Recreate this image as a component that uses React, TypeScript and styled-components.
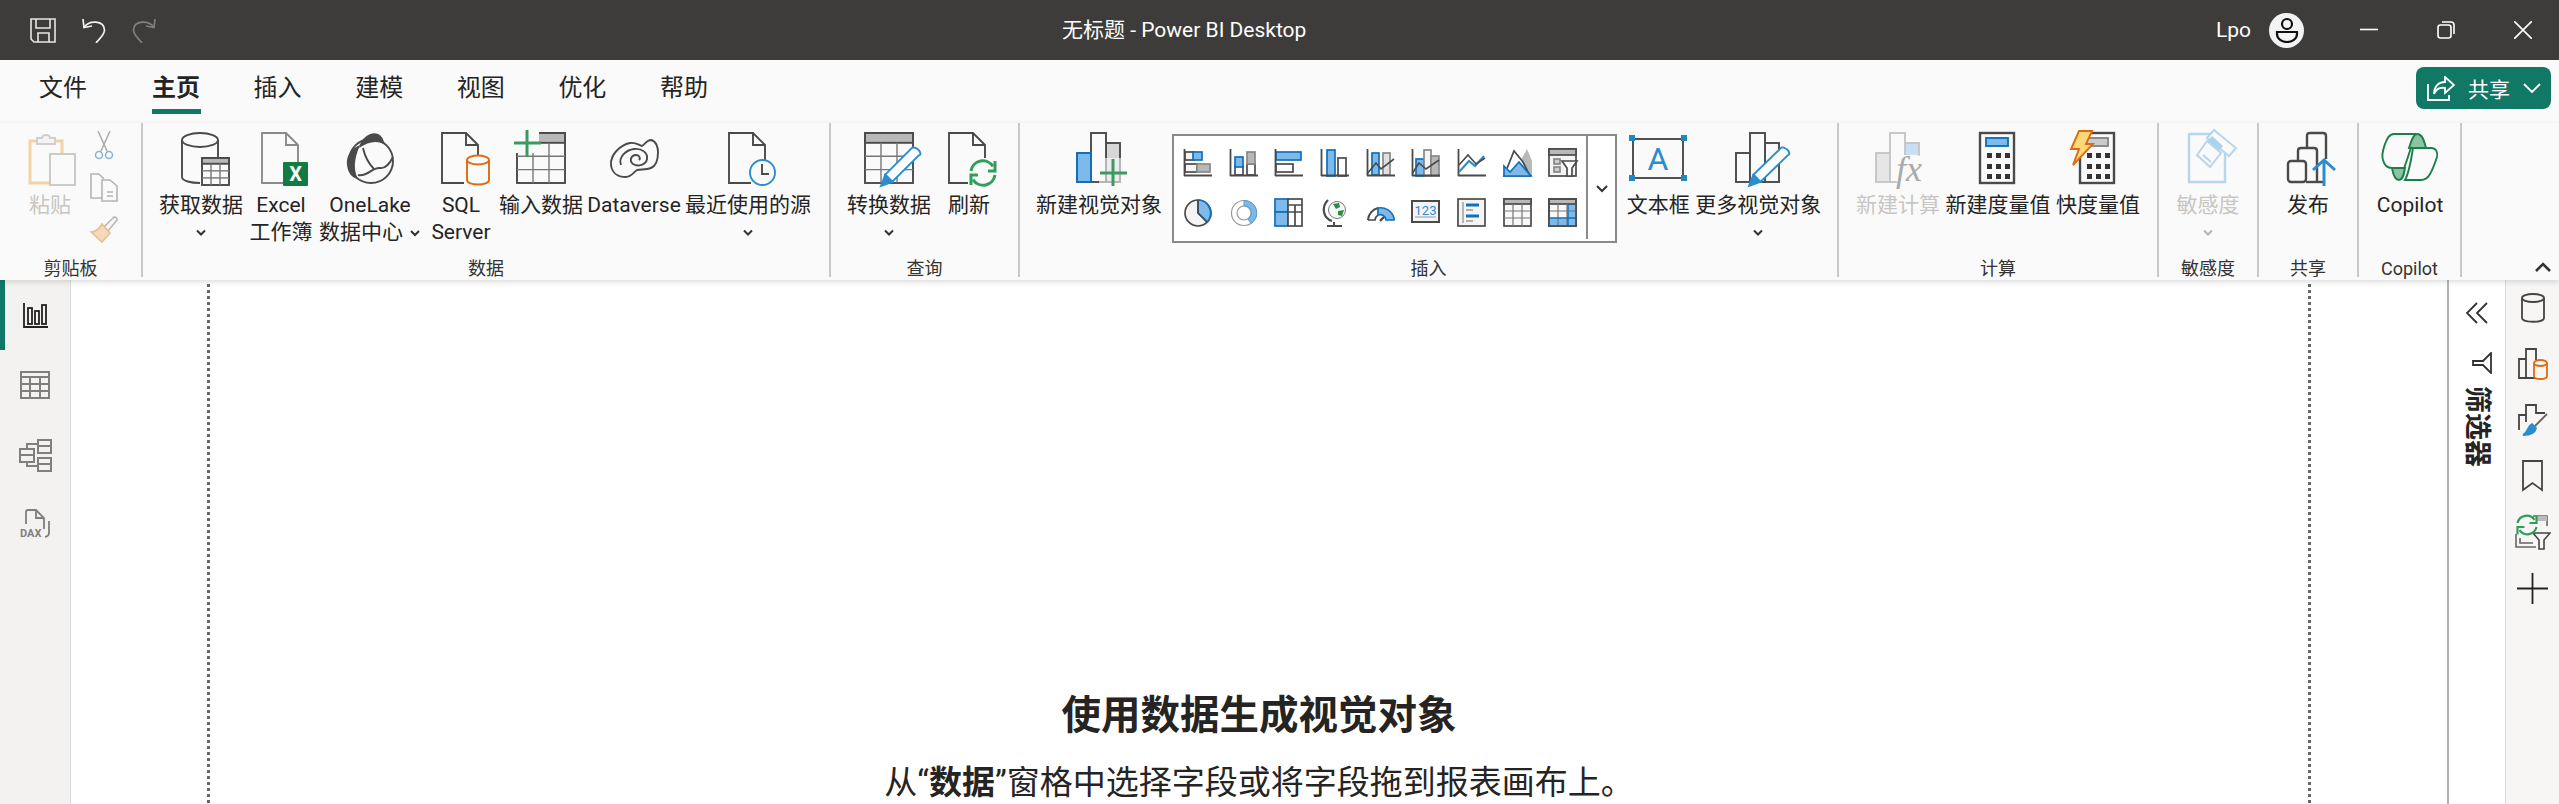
import styled, { createGlobalStyle } from 'styled-components';

const FONT = `Roboto, "Noto Sans CJK SC", sans-serif`;
const DARK = '#4a4a4a';
const BLUE = '#1170b8';
const SKY = '#7db9ea';
const GREY = '#b8b8b8';
const GREEN = '#2e9e5b';
const ORANGE = '#dd6b10';
const PEN = '#2a8dd0';

const GlobalStyle = createGlobalStyle`
  html, body { margin: 0; padding: 0; background: #fff; }
  body { font-family: ${FONT}; color: #252423; }
`;

const Window = styled.div`
  width: 2559px;
  height: 804px;
  display: flex;
  flex-direction: column;
  overflow: hidden;
`;

// title bar
const TitleBar = styled.header`
  flex: 0 0 60px;
  display: flex;
  align-items: center;
  background: #3d3c3a;
  color: #fff;
`;

const QuickAccess = styled.div`
  flex: 0 0 1062px;
  display: flex;
  align-items: center;
  gap: 26px;
  padding-left: 30px;
  box-sizing: border-box;
`;

const WindowTitle = styled.div`
  flex: 1;
  font-size: 21px;
  line-height: 60px;
  white-space: nowrap;
`;

const UserName = styled.span`
  font-size: 21px;
  margin-right: 18px;
`;

const Avatar = styled.div`
  width: 35px;
  height: 35px;
  border-radius: 50%;
  background: #f3f3f3;
  display: flex;
  align-items: center;
  justify-content: center;
  margin-right: 56px;
`;

const WindowButtons = styled.div`
  display: flex;
  align-items: center;
  gap: 59px;
  padding-right: 27px;
`;

// tabs
const TabRow = styled.div`
  flex: 0 0 63px;
  display: flex;
  background: #fafafa;
  padding-left: 39px;
  box-sizing: border-box;
`;

const Tab = styled.div<{ $active?: boolean }>`
  width: 49px;
  margin-right: 52.6px;
  height: 54px;
  font-size: 24px;
  line-height: 30px;
  padding-top: 13px;
  box-sizing: border-box;
  white-space: nowrap;
  font-weight: ${({ $active }) => ($active ? 600 : 400)};
  border-bottom: 5px solid ${({ $active }) => ($active ? '#117865' : 'transparent')};
  &:first-child { margin-right: 64px; }
`;

const ShareButton = styled.button`
  margin: 7px 8px 0 auto;
  width: 135px;
  height: 42px;
  border: 0;
  border-radius: 8px;
  background: #117865;
  color: #fff;
  font: 21px ${FONT};
  display: flex;
  align-items: center;
  padding: 0 0 0 11px;
  gap: 13px;
`;

// ribbon
const Ribbon = styled.div`
  flex: 0 0 157px;
  display: flex;
  background: #fafafa;
  padding-bottom: 3px;
  box-sizing: border-box;
  position: relative;
  box-shadow: 0 2px 6px rgba(0, 0, 0, 0.14);
  z-index: 2;
`;

const Group = styled.section<{ $w: number }>`
  flex: 0 0 ${({ $w }) => $w}px;
  display: flex;
  flex-direction: column;
  border-right: 2px solid #c8c8c8;
  box-sizing: border-box;
`;

const GroupItems = styled.div<{ $pad: number }>`
  flex: 1;
  display: flex;
  align-items: flex-start;
  padding-left: ${({ $pad }) => $pad}px;
  padding-top: 8px;
`;

const GroupLabel = styled.div`
  height: 24px;
  padding-top: 7px;
  box-sizing: border-box;
  line-height: 18px;
  font-size: 18px;
  text-align: center;
  color: #333;
  white-space: nowrap;
`;

const Item = styled.div<{ $w: number; $off?: boolean }>`
  flex: 0 0 ${({ $w }) => $w}px;
  min-width: 0;
  display: flex;
  flex-direction: column;
  align-items: center;
  font-size: 21px;
  line-height: 27px;
  text-align: center;
  white-space: nowrap;
  color: ${({ $off }) => ($off ? '#c8c6c4' : '#252423')};
`;

const BigSvg = styled.svg`
  width: 64px;
  height: 60px;
  margin-bottom: 1px;
  flex: none;
  overflow: visible;
  display: block;
`;

const SmallColumn = styled.div`
  flex: 0 0 30px;
  display: flex;
  flex-direction: column;
  align-items: center;
  gap: 13px;
`;

const Caret = styled.svg`
  width: 12px;
  height: 27px;
  display: block;
`;

const InlineCaret = styled(Caret)`
  display: inline-block;
  vertical-align: top;
  margin-left: 6px;
`;

const Gallery = styled.div`
  flex: 0 0 443px;
  height: 109px;
  margin: 3px 5px 0 2px;
  box-sizing: border-box;
  border: 2px solid #8a8a8a;
  background: #fff;
  display: flex;
`;

const GalleryGrid = styled.div`
  flex: 1;
  display: grid;
  grid-template-columns: repeat(9, 45.7px);
  grid-auto-rows: 50px;
  padding: 2px 0 0 1px;
  border-right: 2px solid #8a8a8a;
  margin-bottom: 2px;
`;

const GalleryCell = styled.div`
  display: flex;
  align-items: center;
  justify-content: center;
`;

const GallerySvg = styled.svg`
  width: 30px;
  height: 30px;
  overflow: visible;
`;

const GalleryMore = styled.div`
  flex: 0 0 27px;
  display: flex;
  align-items: center;
  justify-content: center;
`;

const CollapseButton = styled.div`
  margin-left: auto;
  align-self: flex-end;
  padding: 0 8px 5px 0;
  line-height: 0;
`;

// body of the window
const Workspace = styled.div`
  flex: 1;
  min-height: 0;
  display: flex;
`;

const LeftRail = styled.nav`
  flex: 0 0 71px;
  background: #f3f2f1;
  border-right: 1px solid #dcdcdc;
  box-sizing: border-box;
`;

const RailItem = styled.div<{ $active?: boolean }>`
  height: 70px;
  display: flex;
  align-items: center;
  justify-content: center;
  box-sizing: border-box;
  border-left: 5px solid ${({ $active }) => ($active ? '#117865' : 'transparent')};
  padding-right: 5px;
`;

const Canvas = styled.main`
  flex: 1;
  padding: 4px 136px 0;
  background: #fff;
  min-width: 0;
`;

const Page = styled.div`
  height: 100%;
  box-sizing: border-box;
  padding-top: 407px;
  text-align: center;
  background-image:
    repeating-linear-gradient(to bottom, #666 0 3px, transparent 3px 6px),
    repeating-linear-gradient(to bottom, #666 0 3px, transparent 3px 6px);
  background-size: 3px 100%, 3px 100%;
  background-position: left top, right top;
  background-repeat: no-repeat;
`;

const Heading = styled.h2`
  margin: 0;
  font-size: 39.5px;
  line-height: 50px;
  font-weight: 700;
  color: #252423;
`;

const Hint = styled.p`
  margin: 22px 0 0;
  font-size: 33px;
  line-height: 40px;
  color: #252423;
  white-space: nowrap;
  b { font-weight: 700; }
`;

const FilterPane = styled.aside`
  flex: 0 0 58px;
  border-left: 2px solid #b4b4b4;
  box-sizing: border-box;
  display: flex;
  flex-direction: column;
  align-items: center;
  padding-top: 22px;
  background: #fff;
`;

const FilterTitle = styled.div`
  writing-mode: vertical-rl;
  text-orientation: sideways;
  font-size: 27px;
  line-height: 28px;
  font-weight: 700;
  margin-top: 12px;
  color: #252423;
`;

const FunnelMark = styled.svg`
  margin: 28px 0 0 10px;
`;

const RightRail = styled.aside`
  flex: 0 0 54px;
  background: #f7f6f5;
  border-left: 1px solid #dcdcdc;
  box-sizing: border-box;
`;

const RightItem = styled.div`
  height: 56px;
  display: flex;
  align-items: center;
  justify-content: center;
`;

const Big = ({ children }: { children: React.ReactNode }) => (
  <BigSvg viewBox="0 0 64 60" fill="none" stroke={DARK} strokeWidth={1.9}>
    {children}
  </BigSvg>
);

const Cell = ({ children }: { children: React.ReactNode }) => (
  <GallerySvg viewBox="0 0 30 30" fill="none" stroke={DARK} strokeWidth={1.7}>
    {children}
  </GallerySvg>
);

const Chevron = ({ off }: { off?: boolean }) => (
  <Caret viewBox="0 0 12 27">
    <path d="M2 11.5l4 4 4-4" fill="none" stroke={off ? '#b4b4b4' : '#333'} strokeWidth={2} />
  </Caret>
);

const Doc = ({ x = 13, color = DARK }: { x?: number; color?: string }) => (
  <path
    d={`M${x + 36} 34V14L${x + 24} 2H${x}V52H${x + 22}M${x + 24} 2V14H${x + 36}`}
    stroke={color}
    fill="#fafafa"
  />
);

const GridTable = ({ x, y, w, h, rows = 4, cols = 3 }: { x: number; y: number; w: number; h: number; rows?: number; cols?: number }) => {
  const head = h / (rows + 0.4) * 0.6 + 1;
  const lines = [];
  for (let i = 1; i < cols; i++) {
    const lx = x + (w * i) / cols;
    lines.push(<path key={`c${i}`} d={`M${lx} ${y + head}V${y + h}`} stroke="#777" strokeWidth={1.4} />);
  }
  for (let i = 1; i < rows; i++) {
    const ly = y + head + ((h - head) * i) / rows;
    lines.push(<path key={`r${i}`} d={`M${x} ${ly}H${x + w}`} stroke="#777" strokeWidth={1.4} />);
  }
  return (
    <g>
      <rect x={x} y={y} width={w} height={h} fill="#fafafa" />
      <rect x={x} y={y} width={w} height={head} fill={GREY} />
      {lines}
    </g>
  );
};

const Pencil = ({ x1, y1, x2, y2 }: { x1: number; y1: number; x2: number; y2: number }) => {
  const len = Math.hypot(x2 - x1, y2 - y1);
  const nx = ((y2 - y1) / len) * 5;
  const ny = (-(x2 - x1) / len) * 5;
  const bx = x1 + ((x2 - x1) / len) * 11;
  const by = y1 + ((y2 - y1) / len) * 11;
  return (
    <g stroke={PEN}>
      <path d={`M${bx + nx} ${by + ny}L${x2 + nx} ${y2 + ny}C${x2 + nx + 3} ${y2 + ny - 4} ${x2 - nx + 6} ${y2 - ny - 2} ${x2 - nx} ${y2 - ny}L${bx - nx} ${by - ny}Z`} fill="#fff" />
      <path d={`M${x1} ${y1}L${bx + nx} ${by + ny}L${bx - nx} ${by - ny}Z`} fill={PEN} />
    </g>
  );
};

const RefreshArrows = ({ cx, cy, r, w = 3 }: { cx: number; cy: number; r: number; w?: number }) => (
  <g stroke={GREEN} strokeWidth={w}>
    <path d={`M${cx - r} ${cy - 2}A${r} ${r} 0 0 1 ${cx + r - 2} ${cy - r * 0.55}`} />
    <path d={`M${cx + r} ${cy + 2}A${r} ${r} 0 0 1 ${cx - r + 2} ${cy + r * 0.55}`} />
    <path d={`M${cx + r} ${cy - r}V${cy - 2}H${cx + r - 7}`} />
    <path d={`M${cx - r} ${cy + r}V${cy + 2}H${cx - r + 7}`} />
  </g>
);

const Bars = ({ a = '#fafafa', b = '#fafafa', c = '#fafafa', color = DARK }: { a?: string; b?: string; c?: string; color?: string }) => (
  <g stroke={color}>
    <rect x={39} y={12} width={14} height={39} fill={c} />
    <rect x={10} y={22} width={14} height={29} fill={a} />
    <rect x={24} y={2} width={15} height={49} fill={b} />
  </g>
);

const IconPaste = () => (
  <Big>
    <path d="M22 10H12V52H44V10H34" stroke="#f3d3a6" strokeWidth={3} />
    <path d="M19 12V7H24C24 3 32 3 32 7H37V13H19Z" stroke="#cfcfcf" fill="#f4f4f4" />
    <rect x={32} y={23} width={25} height={31} fill="#fafafa" stroke="#c9c9c9" />
  </Big>
);

const IconGetData = () => (
  <Big>
    <path d="M13 9V46C13 50 22 52 31 52M49 9V26" />
    <ellipse cx={31} cy={9} rx={18} ry={7} fill="#fafafa" />
    <GridTable x={33} y={27} w={27} h={27} rows={3} />
  </Big>
);

const IconExcel = () => (
  <Big>
    <Doc color="#8a8a8a" />
    <rect x={34} y={31} width={25} height={24} rx={1} fill="#107c41" stroke="none" />
    <text x={46.5} y={50} textAnchor="middle" fontSize={20} fontWeight={700} fill="#fff" stroke="none" fontFamily={FONT}>X</text>
  </Big>
);

const IconOneLake = () => (
  <Big>
    <circle cx={33} cy={30} r={22} />
    <path d="M22 14C12 18 8 26 9 34C10 42 14 47 20 48C16 40 15 30 22 14Z" fill={DARK} stroke="none" />
    <path d="M21 17C23 6 34 0 40 3C44 5 46 9 46 13C38 9 30 11 21 17Z" fill={DARK} stroke="none" />
    <path d="M25 17C27 26 31 33 36 38" />
    <path d="M20 44C30 46 34 36 42 37C48 38 52 32 55 26" />
  </Big>
);

const IconSql = () => (
  <Big>
    <Doc />
    <g stroke={ORANGE}>
      <path d="M38 29V49C38 55 60 55 60 49V29" fill="#fafafa" />
      <ellipse cx={49} cy={29} rx={11} ry={4.5} fill="#fafafa" />
    </g>
  </Big>
);

const IconEnterData = () => (
  <Big>
    <GridTable x={8} y={2} w={48} h={50} rows={3} />
    <rect x={5} y={0} width={25} height={22} fill="#fafafa" stroke="none" />
    <path d="M5 12H32M18 -1V26" stroke="#3c9a5f" strokeWidth={3} />
  </Big>
);

const IconDataverse = () => (
  <Big>
    <path d="M28 12C33 11 37 14 40 15C43 13 45 9 49 9C54 10 56 16 56 21C56 30 54 35 49 37C44 39 39 38 35 39C32 41 29 46 24 46C16 46 10 42 9 34C8 24 18 14 28 12Z" />
    <path d="M19 34C16 26 24 19 32 18C40 17 46 22 45 28C44 34 36 36 31 33C27 30 29 24 34 24C37 24 39 27 37 29" />
  </Big>
);

const IconRecent = () => (
  <Big>
    <Doc />
    <g stroke={PEN}>
      <circle cx={46.5} cy={41.5} r={12.5} fill="#fafafa" />
    </g>
    <path d="M46 33V43H53" stroke={DARK} />
  </Big>
);

const IconTransform = () => (
  <Big>
    <GridTable x={8} y={2} w={48} h={50} rows={3} />
    <Pencil x1={24} y1={55} x2={58} y2={21} />
  </Big>
);

const IconRefresh = () => (
  <Big>
    <Doc x={12} />
    <rect x={31} y={27} width={30} height={30} fill="#fafafa" stroke="none" />
    <RefreshArrows cx={46} cy={42} r={12} />
  </Big>
);

const IconNewVisual = () => (
  <Big>
    <Bars a={SKY} c="#d6d6d6" />
    <rect x={32} y={27} width={29} height={29} fill="#fafafa" stroke="none" opacity={0.6} />
    <path d="M33 42H60M46 28V55" stroke="#3c9a5f" strokeWidth={3} />
    <path d="M10 22H24V51H10Z" stroke={BLUE} />
  </Big>
);

const IconTextBox = () => (
  <Big>
    <rect x={7} y={8} width={50} height={39} />
    <g fill="#1f86c8" stroke="none">
      <rect x={3} y={4} width={6} height={6} />
      <rect x={55} y={4} width={6} height={6} />
      <rect x={3} y={44} width={6} height={6} />
      <rect x={55} y={44} width={6} height={6} />
    </g>
    <text x={32} y={39} textAnchor="middle" fontSize={32} fill={PEN} stroke="none" fontFamily={FONT}>A</text>
  </Big>
);

const IconMoreVisuals = () => (
  <Big>
    <Bars />
    <Pencil x1={23} y1={55} x2={58} y2={21} />
  </Big>
);

const IconNewCalc = () => (
  <Big>
    <Bars a="#e6e6e6" c="#c9dff3" color="#c6c6c6" />
    <rect x={28} y={24} width={32} height={30} fill="#fafafa" stroke="none" rx={10} />
    <text x={30} y={50} fontSize={36} fontStyle="italic" fill="#aaa" stroke="none" fontFamily='"Liberation Serif", serif'>fx</text>
  </Big>
);

const Calculator = ({ x = 14 }: { x?: number }) => (
  <g>
    <rect x={x} y={2} width={34} height={50} fill="#fafafa" strokeWidth={2.4} />
    {[22, 33, 43].map((y) =>
      [8, 17, 26].map((dx) => <rect key={`${y}${dx}`} x={x + dx - 1} y={y} width={5} height={5} fill="#333" stroke="none" />),
    )}
  </g>
);

const IconMeasure = () => (
  <Big>
    <Calculator />
    <rect x={20} y={7} width={22} height={8} fill={SKY} stroke={BLUE} />
  </Big>
);

const IconQuickMeasure = () => (
  <Big>
    <Calculator />
    <rect x={20} y={7} width={22} height={8} fill="#ccc" stroke="#888" />
    <path d="M13 0H26L20 13H27L7 34L13 18H5Z" fill="#fbd878" stroke={ORANGE} />
  </Big>
);

const IconSensitivity = () => (
  <Big>
    <path d="M38 3H13V51H49V22" stroke="#b5d6ec" strokeWidth={2.4} fill="#fafafa" />
    <path d="M38 0L60 18L53 26L31 8Z" fill="#fafafa" stroke="#b5d6ec" strokeWidth={2} transform="translate(0 -1)" />
    <path d="M36 5L47 15L41 22L30 12Z" fill="#a9d2ee" stroke="none" />
    <path d="M31 10L21 24L34 36L45 22Z" fill="#fafafa" stroke="#b5d6ec" strokeWidth={2} />
    <path d="M27 24L35 31" stroke="#b5d6ec" strokeWidth={2} />
  </Big>
);

const IconPublish = () => (
  <Big>
    <g strokeWidth={2.4}>
      <rect x={12} y={30} width={18} height={21} rx={3} />
      <path d="M22 30V20Q22 17 25 17H38Q41 17 41 20V51" />
      <path d="M31 17V5Q31 2 34 2H47Q50 2 50 5V28" />
      <path d="M30 51H47" />
    </g>
    <path d="M37 39L48 29L59 39M48 29V55" stroke={PEN} strokeWidth={3} />
  </Big>
);

const IconCopilot = () => (
  <Big>
    <g stroke="#1a7f4b">
      <path d="M37 3H16C11 3 9 8 7 13C5 19 3 24 5 29C6 33 9 37 14 37H26C29 30 31 22 34 14Z" fill="#fafafa" />
      <path d="M35 17H53C58 17 60 21 59 26C57 32 55 38 52 43C50 47 47 49 43 49H27C31 42 33 30 35 17Z" fill="#fafafa" />
      <path d="M31 17C33 10 36 3 39 3C44 3 46 9 48 17Z" fill="#8cc3a2" />
      <path d="M14 37H27C26 43 25 49 21 49C17 49 15 43 14 37Z" fill="#8cc3a2" />
    </g>
  </Big>
);

const Axis = () => <path d="M1.5 1V28M1 27.5H29" strokeWidth={1.8} />;

const galleryIcons = [
  <Cell key="1">
    <rect x={2} y={4} width={9} height={8} fill="#f4f4f4" />
    <rect x={10} y={4} width={9} height={8} fill={SKY} stroke={BLUE} />
    <rect x={2} y={16} width={12} height={8} fill="#f4f4f4" />
    <rect x={14} y={16} width={13} height={8} fill={GREY} stroke="#888" />
    <Axis />
  </Cell>,
  <Cell key="2">
    <rect x={6} y={18} width={8} height={9} fill="#fff" />
    <rect x={6} y={9} width={8} height={10} fill={SKY} stroke={BLUE} />
    <rect x={18} y={16} width={8} height={11} fill="#fff" />
    <rect x={18} y={4} width={8} height={12} fill={GREY} stroke="#888" />
    <Axis />
  </Cell>,
  <Cell key="3">
    <rect x={2} y={4} width={25} height={8} fill={SKY} stroke={BLUE} />
    <rect x={2} y={16} width={17} height={8} fill="#fff" />
    <Axis />
  </Cell>,
  <Cell key="4">
    <rect x={7} y={2} width={8} height={26} fill={SKY} stroke={BLUE} />
    <rect x={18} y={10} width={8} height={18} fill="#fff" />
    <Axis />
  </Cell>,
  <Cell key="5">
    <rect x={6} y={5} width={7} height={22} fill={SKY} stroke={BLUE} />
    <rect x={17} y={5} width={7} height={22} fill="#e0e0e0" stroke="#888" />
    <Axis />
    <path d="M1 26L10 15L15 21L28 11" strokeWidth={1.6} />
  </Cell>,
  <Cell key="6">
    <rect x={5} y={11} width={8} height={17} fill={SKY} stroke={BLUE} />
    <rect x={13} y={2} width={7} height={26} fill="#f4f4f4" stroke="#888" />
    <rect x={20} y={8} width={8} height={20} fill={GREY} stroke="#888" />
    <Axis />
    <path d="M1 26L8 15L15 21L28 12" strokeWidth={1.6} />
  </Cell>,
  <Cell key="7">
    <Axis />
    <path d="M2 24L12 13L18 18L27 8" stroke={PEN} strokeWidth={2} />
    <path d="M2 17L11 7L19 16L28 10" strokeWidth={1.6} />
  </Cell>,
  <Cell key="8">
    <path d="M18 28V12L24 1L29 13V28Z" fill={GREY} stroke="none" />
    <path d="M1 28L11 3L20 14L27 28Z" fill="#fff" />
    <path d="M1 18L7 24L16 14L28 28H1Z" fill={SKY} stroke={BLUE} />
  </Cell>,
  <Cell key="9">
    <rect x={1} y={1} width={27} height={27} fill="#f4f4f4" />
    <rect x={1} y={1} width={27} height={6} fill={GREY} />
    <rect x={6} y={11} width={6} height={5} fill="#ccc" stroke="#888" />
    <rect x={6} y={19} width={6} height={5} fill="#ccc" stroke="#888" />
    <path d="M14 13H29L24 20V28H19V20Z" fill="#fff" />
  </Cell>,
  <Cell key="10">
    <circle cx={15} cy={15} r={13} fill="#f4f4f4" />
    <path d="M15 2A13 13 0 0 1 24 24L15 15Z" fill={SKY} stroke={BLUE} />
    <path d="M15 2V15L24 24" />
  </Cell>,
  <Cell key="11">
    <circle cx={15} cy={15} r={12.5} stroke="#999" strokeWidth={1.2} />
    <circle cx={15} cy={15} r={7} stroke="#999" strokeWidth={1.2} />
    <path d="M15 2.5A12.5 12.5 0 0 1 22 25.5L19 21A7 7 0 0 0 15 8Z" fill={SKY} stroke="#5a9bd0" strokeWidth={1} />
  </Cell>,
  <Cell key="12">
    <rect x={1} y={1} width={13} height={13} fill={SKY} stroke={BLUE} />
    <rect x={1} y={14} width={13} height={14} fill={SKY} stroke={BLUE} />
    <rect x={14} y={1} width={14} height={27} fill="#fff" />
    <path d="M14 7H28M21 7V14M14 14H28M21 14V28" />
  </Cell>,
  <Cell key="13">
    <circle cx={17} cy={12} r={8.5} fill="#f8f8f8" stroke="#777" strokeWidth={1} />
    <path d="M13 6L19 5L20 9L16 11ZM18 13L24 12L22 18L18 17Z" fill="#2d8b46" stroke="none" />
    <path d="M8 2C1 9 3 20 12 23" strokeWidth={2.2} />
    <path d="M14 24V27M7 28H22" strokeWidth={2} />
  </Cell>,
  <Cell key="14">
    <path d="M2 22A13 13 0 0 1 12 10" strokeWidth={2} />
    <path d="M12 10A14 14 0 0 1 28 20L28 22H20A6 6 0 0 0 12 17Z" fill={SKY} stroke={BLUE} />
    <path d="M2 22H9A7 7 0 0 1 12 17" strokeWidth={1.6} />
    <path d="M14 23L18 19" strokeWidth={2.4} />
  </Cell>,
  <Cell key="15">
    <rect x={1} y={3} width={27} height={21} fill="#f4f4f4" strokeWidth={2} />
    <path d="M4 19H25" stroke="#999" strokeWidth={1} />
    <text x={14.5} y={17} textAnchor="middle" fontSize={13} fill={PEN} stroke="none" fontFamily={FONT}>123</text>
  </Cell>,
  <Cell key="16">
    <rect x={1} y={1} width={27} height={27} fill="#f4f4f4" />
    <path d="M6 4V25" stroke="#aaa" />
    <path d="M9 7H22M9 18H22" stroke={BLUE} strokeWidth={3} />
    <path d="M9 12H16M9 23H16" stroke="#999" strokeWidth={1.5} />
  </Cell>,
  <Cell key="17">
    <rect x={1} y={1} width={27} height={27} fill="#f8f8f8" />
    <rect x={1} y={1} width={27} height={5} fill={GREY} />
    <path d="M1 13H28M1 20H28M10 6V28M19 6V28" stroke="#777" strokeWidth={1.2} />
  </Cell>,
  <Cell key="18">
    <rect x={1} y={1} width={27} height={27} fill="#f8f8f8" />
    <rect x={20} y={6} width={8} height={22} fill={SKY} stroke="none" />
    <rect x={1} y={20} width={27} height={8} fill={SKY} stroke="none" />
    <rect x={1} y={1} width={27} height={5} fill={GREY} />
    <path d="M1 13H28M10 6V28M19 6V28" stroke="#777" strokeWidth={1.2} />
    <path d="M1 20H28M20 6V28" stroke={BLUE} strokeWidth={1.4} />
    <rect x={1} y={1} width={27} height={27} />
  </Cell>,
];

export default function App() {
  return (
    <Window>
      <GlobalStyle />
      <TitleBar>
        <QuickAccess>
          <svg width="26" height="25" viewBox="0 0 26 25" fill="none" stroke="#e6e6e6" strokeWidth="1.6">
            <path d="M1 1H25V24H4L1 21Z" />
            <path d="M6 1V10H20V1M8 24V15H19V24" />
          </svg>
          <svg width="24" height="25" viewBox="0 0 24 25" fill="none" stroke="#f0f0f0" strokeWidth="1.7">
            <path d="M1 1L2 9.5L10 8" />
            <path d="M2 9.5C7 2 22 2 22.5 12C22.5 17 17 21 14 25" />
          </svg>
          <svg width="24" height="25" viewBox="0 0 24 25" fill="none" stroke="#7f7f7f" strokeWidth="1.7">
            <path d="M23 1L22 9.5L14 8" />
            <path d="M22 9.5C17 2 2 2 1.5 12C1.5 17 7 21 10 25" />
          </svg>
        </QuickAccess>
        <WindowTitle>无标题 - Power BI Desktop</WindowTitle>
        <UserName>Lpo</UserName>
        <Avatar>
          <svg width="24" height="26" viewBox="0 0 24 26" fill="none" stroke="#111" strokeWidth="2.2">
            <circle cx="12" cy="7" r="5" />
            <path d="M2 15H22V17C22 22 17 25 12 25C7 25 2 22 2 17Z" />
          </svg>
        </Avatar>
        <WindowButtons>
          <svg width="18" height="18" viewBox="0 0 18 18" stroke="#fff" strokeWidth="1.6"><path d="M0 8.5H18" /></svg>
          <svg width="18" height="18" viewBox="0 0 18 18" fill="none" stroke="#fff" strokeWidth="1.6">
            <rect x="1" y="4" width="13" height="13" rx="2.5" />
            <path d="M5 1H14Q17 1 17 4V13" />
          </svg>
          <svg width="18" height="18" viewBox="0 0 18 18" stroke="#fff" strokeWidth="1.6"><path d="M0 0L18 18M18 0L0 18" /></svg>
        </WindowButtons>
      </TitleBar>

      <TabRow>
        <Tab>文件</Tab>
        <Tab $active>主页</Tab>
        <Tab>插入</Tab>
        <Tab>建模</Tab>
        <Tab>视图</Tab>
        <Tab>优化</Tab>
        <Tab>帮助</Tab>
        <ShareButton>
          <svg width="28" height="25" viewBox="0 0 28 25" fill="none" stroke="#fff" strokeWidth="1.8">
            <path d="M1 8V24H22V19" />
            <path d="M18 1L27 9L18 17V12C13 11 9 13 7 18C7 11 11 6 18 6Z" />
          </svg>
          <span>共享</span>
          <svg width="18" height="10" viewBox="0 0 18 10" fill="none" stroke="#fff" strokeWidth="1.8"><path d="M1 1L9 9L17 1" /></svg>
        </ShareButton>
      </TabRow>

      <Ribbon>
        <Group $w={143}>
          <GroupItems $pad={11}>
            <Item $w={78} $off>
              <IconPaste />
              粘贴
            </Item>
            <SmallColumn>
              <svg width="20" height="29" viewBox="0 0 20 29" fill="none" stroke="#aaa" strokeWidth="1.5">
                <path d="M4 0L13 20M16 0L7 20" />
                <circle cx="5" cy="24" r="3.5" stroke="#86b4d8" />
                <circle cx="15" cy="24" r="3.5" stroke="#86b4d8" />
              </svg>
              <svg width="28" height="29" viewBox="0 0 28 29" fill="none" stroke="#b4b4b4" strokeWidth="1.6">
                <path d="M14 25H1V1H9L14 6" />
                <path d="M12 7H20L27 13V28H12Z" fill="#fafafa" />
                <path d="M17 19H23M17 23H23" />
              </svg>
              <svg width="28" height="28" viewBox="0 0 28 28" fill="none" stroke="#b4b4b4" strokeWidth="1.5">
                <path d="M14 12L24 2Q27 2 27 5L18 16Z" />
                <path d="M12 9L20 18L12 27L1 17C6 17 9 14 12 9Z" fill="#f5d9b8" stroke="#e6bd8e" />
              </svg>
            </SmallColumn>
          </GroupItems>
          <GroupLabel>剪贴板</GroupLabel>
        </Group>

        <Group $w={688}>
          <GroupItems $pad={12}>
            <Item $w={92}>
              <IconGetData />
              获取数据
              <Chevron />
            </Item>
            <Item $w={68}>
              <IconExcel />
              Excel
              <br />
              工作簿
            </Item>
            <Item $w={110}>
              <IconOneLake />
              OneLake
              <div>
                数据中心
                <InlineCaret viewBox="0 0 12 27">
                  <path d="M2 12l4 4 4-4" fill="none" stroke="#333" strokeWidth={2} />
                </InlineCaret>
              </div>
            </Item>
            <Item $w={72}>
              <IconSql />
              SQL
              <br />
              Server
            </Item>
            <Item $w={88}>
              <IconEnterData />
              输入数据
            </Item>
            <Item $w={98}>
              <IconDataverse />
              Dataverse
            </Item>
            <Item $w={130}>
              <IconRecent />
              最近使用的源
              <Chevron />
            </Item>
          </GroupItems>
          <GroupLabel>数据</GroupLabel>
        </Group>

        <Group $w={189}>
          <GroupItems $pad={14}>
            <Item $w={88}>
              <IconTransform />
              转换数据
              <Chevron />
            </Item>
            <Item $w={72}>
              <IconRefresh />
              刷新
            </Item>
          </GroupItems>
          <GroupLabel>查询</GroupLabel>
        </Group>

        <Group $w={819}>
          <GroupItems $pad={8}>
            <Item $w={142}>
              <IconNewVisual />
              新建视觉对象
            </Item>
            <Gallery>
              <GalleryGrid>
                {galleryIcons.map((icon) => (
                  <GalleryCell key={icon.key}>{icon}</GalleryCell>
                ))}
              </GalleryGrid>
              <GalleryMore>
                <svg width="14" height="10" viewBox="0 0 14 10" fill="none" stroke="#333" strokeWidth="2"><path d="M2 2l5 5 5-5" /></svg>
              </GalleryMore>
            </Gallery>
            <Item $w={72}>
              <IconTextBox />
              文本框
            </Item>
            <Item $w={128}>
              <IconMoreVisuals />
              更多视觉对象
              <Chevron />
            </Item>
          </GroupItems>
          <GroupLabel>插入</GroupLabel>
        </Group>

        <Group $w={320}>
          <GroupItems $pad={9}>
            <Item $w={100} $off>
              <IconNewCalc />
              新建计算
            </Item>
            <Item $w={100}>
              <IconMeasure />
              新建度量值
            </Item>
            <Item $w={100}>
              <IconQuickMeasure />
              快度量值
            </Item>
          </GroupItems>
          <GroupLabel>计算</GroupLabel>
        </Group>

        <Group $w={100}>
          <GroupItems $pad={4}>
            <Item $w={90} $off>
              <IconSensitivity />
              敏感度
              <Chevron off />
            </Item>
          </GroupItems>
          <GroupLabel>敏感度</GroupLabel>
        </Group>

        <Group $w={100}>
          <GroupItems $pad={4}>
            <Item $w={90}>
              <IconPublish />
              发布
            </Item>
          </GroupItems>
          <GroupLabel>共享</GroupLabel>
        </Group>

        <Group $w={103}>
          <GroupItems $pad={6}>
            <Item $w={90}>
              <IconCopilot />
              Copilot
            </Item>
          </GroupItems>
          <GroupLabel>Copilot</GroupLabel>
        </Group>

        <CollapseButton>
          <svg width="16" height="10" viewBox="0 0 16 10" fill="none" stroke="#333" strokeWidth="2.6"><path d="M1 9L8 2L15 9" /></svg>
        </CollapseButton>
      </Ribbon>

      <Workspace>
        <LeftRail>
          <RailItem $active>
            <svg width="25" height="25" viewBox="0 0 25 25" fill="none" stroke="#222" strokeWidth="1.8">
              <path d="M1 0V24H25" />
              <rect x="5" y="5" width="4" height="16" />
              <rect x="12" y="8" width="4" height="13" />
              <rect x="19" y="2" width="4" height="19" />
            </svg>
          </RailItem>
          <RailItem>
            <svg width="30" height="28" viewBox="0 0 30 28" fill="none" stroke="#807f7e" strokeWidth="2">
              <rect x="1" y="1" width="28" height="26" />
              <path d="M1 6H29M1 13H29M1 20H29M10 6V27M20 6V27" />
            </svg>
          </RailItem>
          <RailItem>
            <svg width="33" height="33" viewBox="0 0 33 33" fill="none" stroke="#807f7e" strokeWidth="2">
              <rect x="1" y="10" width="14" height="13" />
              <path d="M1 16H15" />
              <rect x="19" y="1" width="13" height="13" />
              <path d="M19 7H32" />
              <rect x="19" y="19" width="13" height="13" />
              <path d="M19 25H32M8 10V5H19M8 23V27H19" />
            </svg>
          </RailItem>
          <RailItem>
            <svg width="34" height="32" viewBox="0 0 34 32" fill="none" stroke="#807f7e" strokeWidth="1.8">
              <path d="M8 15V3Q8 1 10 1H18L26 9V20" />
              <path d="M18 1V9H26M31 12V24Q31 27 27 28" />
              <text x="2" y="28" fontSize="11" fontWeight="700" fill="#807f7e" stroke="none" fontFamily={FONT}>DAX</text>
            </svg>
          </RailItem>
        </LeftRail>

        <Canvas>
          <Page>
            <Heading>使用数据生成视觉对象</Heading>
            <Hint>
              从“<b>数据</b>”窗格中选择字段或将字段拖到报表画布上。
            </Hint>
          </Page>
        </Canvas>

        <FilterPane>
          <svg width="22" height="22" viewBox="0 0 22 22" fill="none" stroke="#333" strokeWidth="1.8">
            <path d="M11 1L1 11L11 21M21 1L11 11L21 21" />
          </svg>
          <FunnelMark width="20" height="22" viewBox="0 0 20 22" fill="none" stroke="#333" strokeWidth="1.8">
            <path d="M19 1V21L11 13H1V9H11Z" />
          </FunnelMark>
          <FilterTitle>筛选器</FilterTitle>
        </FilterPane>

        <RightRail>
          <RightItem>
            <svg width="24" height="30" viewBox="0 0 24 30" fill="none" stroke="#444" strokeWidth="1.8">
              <ellipse cx="12" cy="5" rx="11" ry="4" />
              <path d="M1 5V25C1 30 23 30 23 25V5" />
            </svg>
          </RightItem>
          <RightItem>
            <svg width="30" height="32" viewBox="0 0 30 32" fill="none" stroke="#444" strokeWidth="1.8">
              <path d="M8 30V11H1V30H17M8 11V1H18V12" />
              <g stroke={ORANGE}>
                <path d="M16 15V28C16 32 29 32 29 28V15" />
                <ellipse cx="22.5" cy="15" rx="6.5" ry="3" />
              </g>
            </svg>
          </RightItem>
          <RightItem>
            <svg width="30" height="32" viewBox="0 0 30 32" fill="none" stroke="#444" strokeWidth="1.8">
              <path d="M1 26V11H8V1H18V9H27" />
              <path d="M8 11V18" />
              <path d="M29 10C26 13 20 19 17 22" stroke="#666" />
              <path d="M5 31C11 31 17 29 18 24L14 20C9 22 11 28 5 31Z" fill={PEN} stroke={PEN} />
            </svg>
          </RightItem>
          <RightItem>
            <svg width="21" height="32" viewBox="0 0 21 32" fill="none" stroke="#444" strokeWidth="1.8">
              <path d="M1 1H20V30L10.5 23L1 30Z" />
            </svg>
          </RightItem>
          <RightItem>
            <svg width="36" height="36" viewBox="0 0 36 36" fill="none" stroke="#666" strokeWidth="1.6">
              <path d="M18 2H32V12" />
              <rect x="21" y="2" width="11" height="5" fill="#bbb" stroke="none" />
              <path d="M1 20V33H21M5 24V29H18" />
              <path d="M18 19H35L29 26V35H24V26Z" fill="#f7f6f5" stroke="#444" />
              <RefreshArrows cx={12} cy={11} r={9.5} w={2.2} />
            </svg>
          </RightItem>
          <RightItem>
            <svg width="31" height="31" viewBox="0 0 31 31" stroke="#222" strokeWidth="1.8"><path d="M15.5 0V31M0 15.5H31" /></svg>
          </RightItem>
        </RightRail>
      </Workspace>
    </Window>
  );
}
